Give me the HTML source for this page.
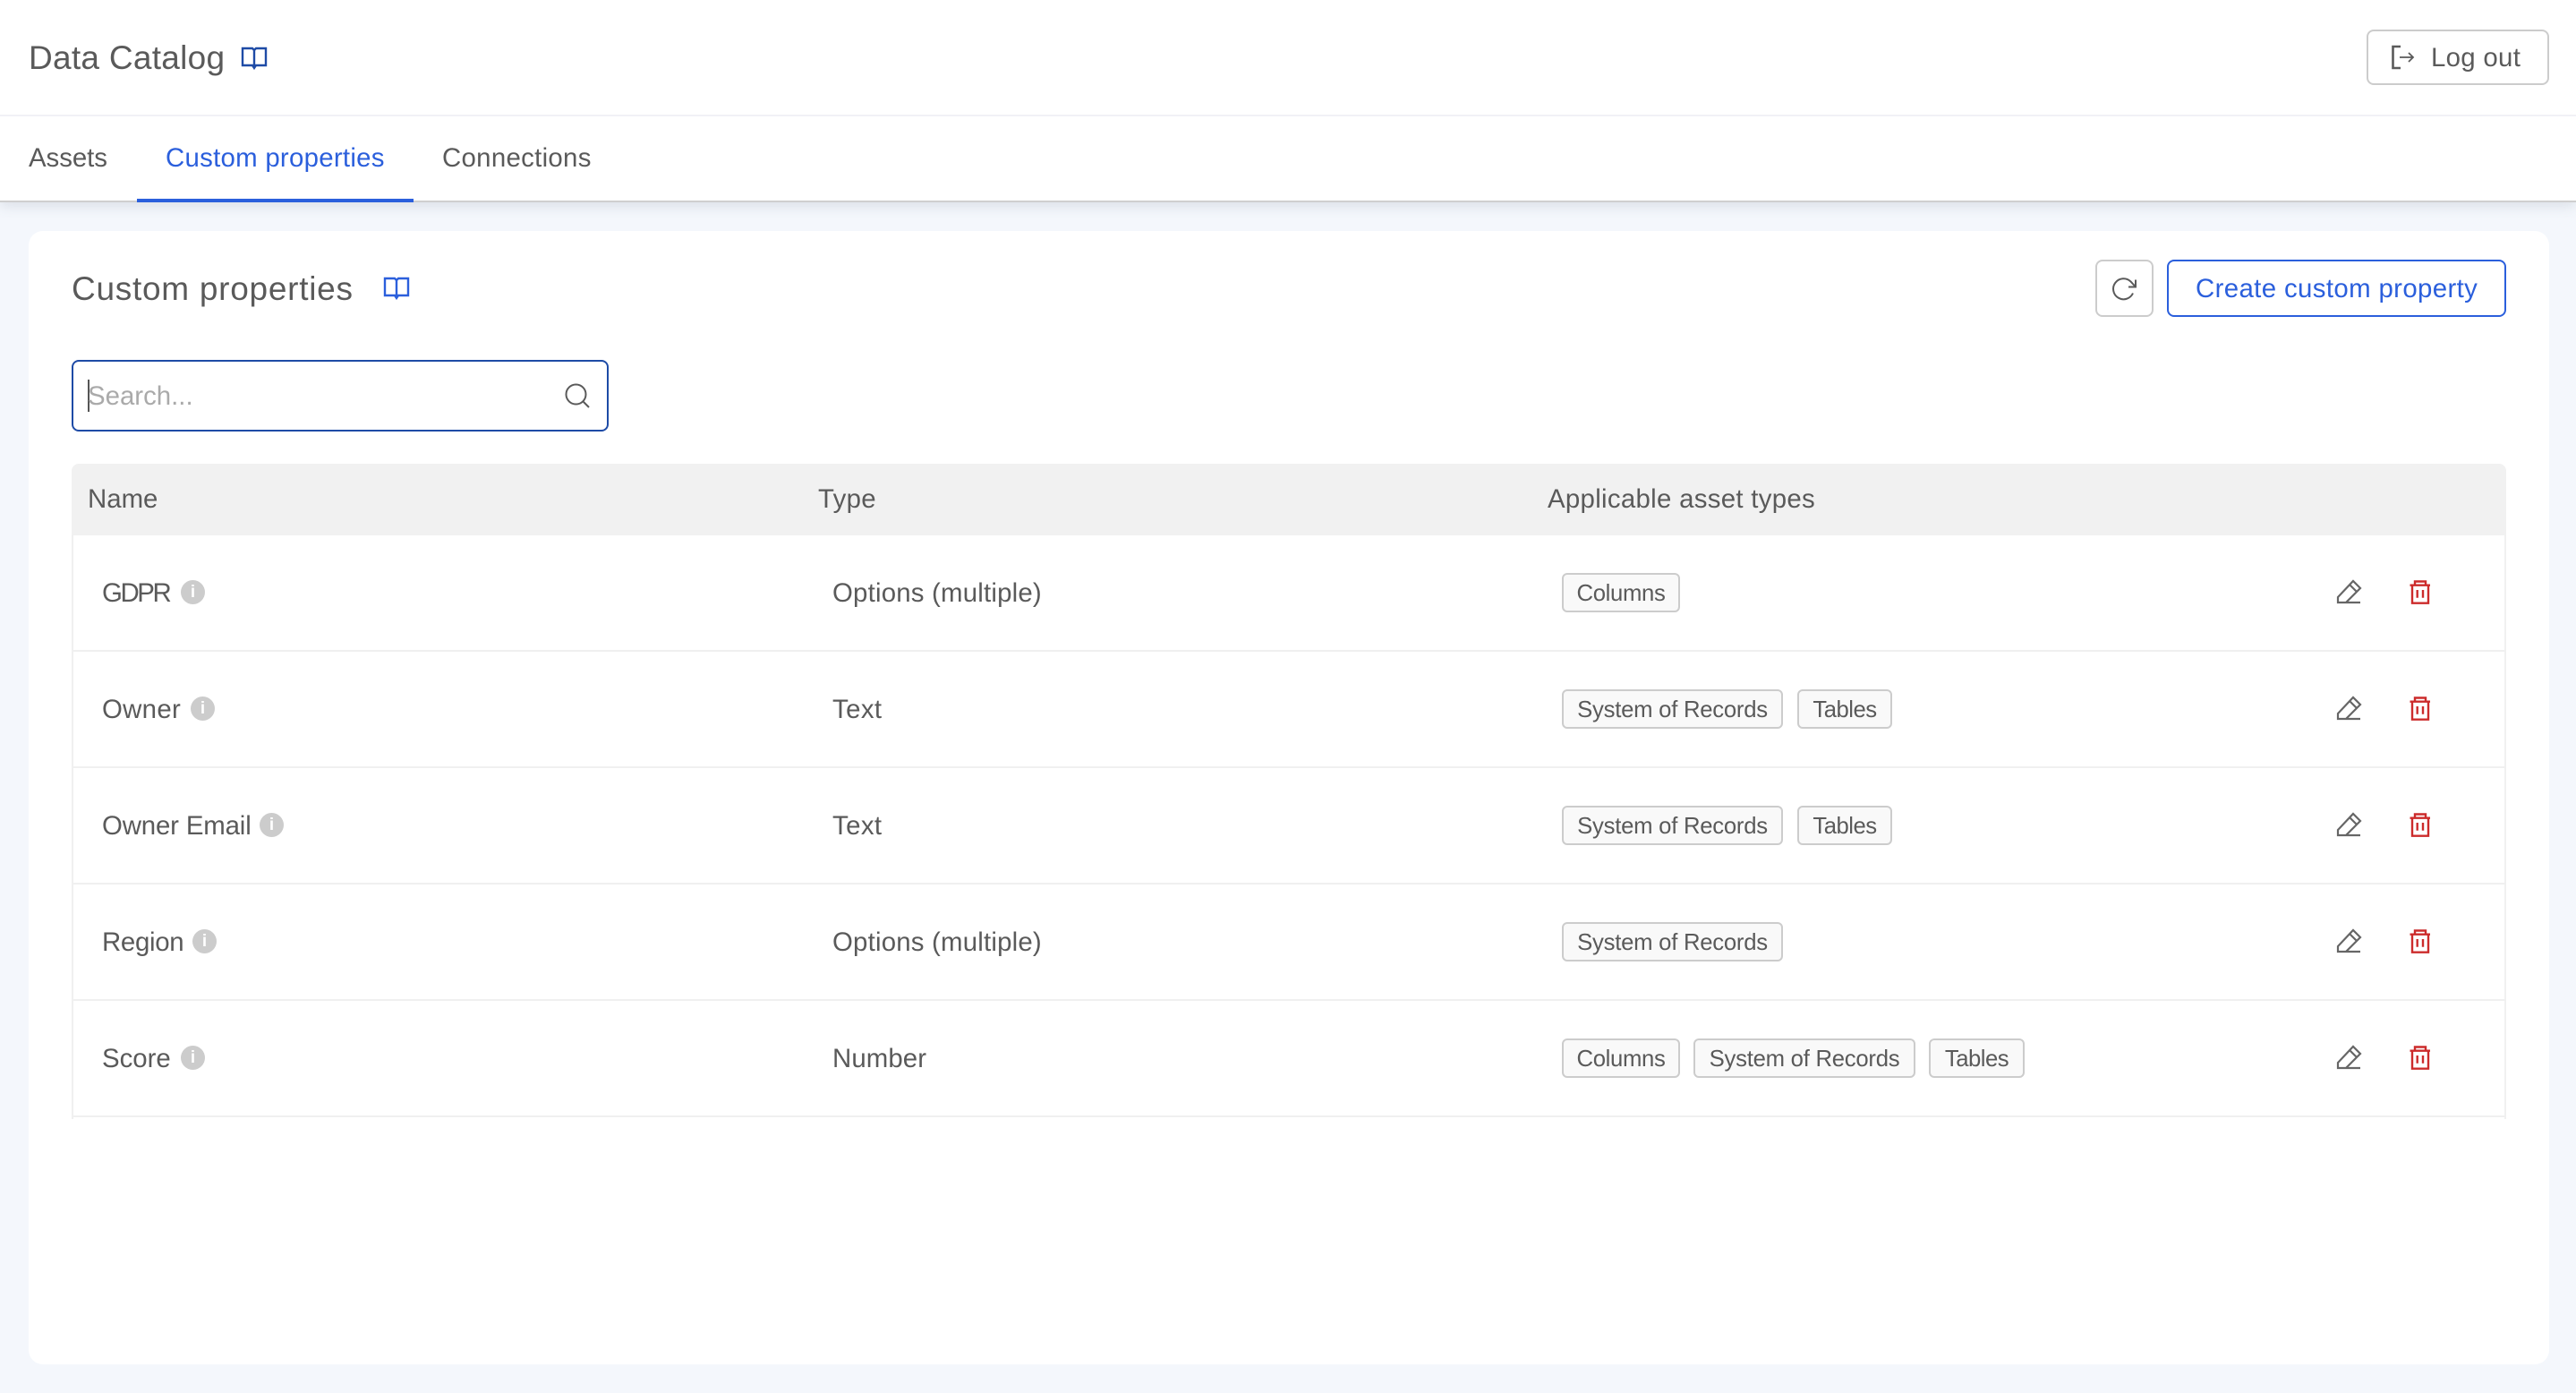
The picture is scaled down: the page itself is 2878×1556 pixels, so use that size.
<!DOCTYPE html>
<html lang="en">
<head>
<meta charset="utf-8">
<title>Data Catalog</title>
<style>
*{box-sizing:border-box;margin:0;padding:0}
html,body{width:2878px;height:1556px;overflow:hidden;background:#f4f7fc;font-family:"Liberation Sans",sans-serif;color:#5a5a5a;font-size:29.4px}
.t{position:absolute;white-space:nowrap;height:40px;line-height:40px;margin-top:1px}
svg{position:absolute;display:block;fill:none}
#top{position:absolute;left:0;top:0;width:2878px;height:226px;background:#fff;border-bottom:2px solid #cfcfcf;box-shadow:0 4px 14px rgba(90,100,120,.16)}
#hl{position:absolute;left:0;top:128px;width:2878px;height:2px;background:#f1f1f6}
#ul{position:absolute;left:153px;top:222px;width:309px;height:4px;background:#2b5fdc}
.btn{position:absolute;background:#fff;border:2px solid #ccc;border-radius:8px}
#card{position:absolute;left:32px;top:258px;width:2816px;height:1266px;background:#fff;border-radius:16px}
#search{position:absolute;left:80px;top:402px;width:600px;height:80px;border:2px solid #1e4ba6;border-radius:8px;background:#fff}
#caret{position:absolute;left:98px;top:424px;width:2px;height:36px;background:#555}
#thead{position:absolute;left:80px;top:518px;width:2720px;height:80px;background:#f1f1f1;border-radius:8px 8px 0 0}
.sep{position:absolute;left:80px;width:2720px;height:2px;background:#f0f0f0}
.v{position:absolute;top:598px;height:652px;width:2px;background:#f0f0f0}
.chip{position:absolute;height:44px;line-height:42px;background:#f9f9f9;border:2px solid #ccc;border-radius:6px;font-size:25.7px;text-align:center;white-space:nowrap}
.info{position:absolute;width:27px;height:27px;border-radius:50%;background:#ccc;color:#fff;font:bold 19px/28px "Liberation Sans",sans-serif;text-align:center}
</style>
</head>
<body>
<div id="top"></div>
<div id="hl"></div>
<div id="ul"></div>

<div class="t" style="left:32px;top:44px;font-size:37px;letter-spacing:.28px">Data Catalog</div>
<svg style="left:268px;top:49px" width="32" height="32" viewBox="0 0 32 32" stroke="#1e4ba6" stroke-width="2.4"><path d="M3 5h11l2 2 2-2h11v19H18l-2 3-2-3H3zM16 7v18"/></svg>

<div class="btn" style="left:2644px;top:33px;width:204px;height:62px"></div>
<svg style="left:2668px;top:48px" width="32" height="32" viewBox="0 0 32 32" stroke="#5a5a5a"><path d="M14 4H5.5V28H14" stroke-width="2.6"/><path d="M13 16h15M23 11l5 5-5 5" stroke-width="1.8"/></svg>
<div class="t" style="left:2716px;top:44px;letter-spacing:.3px">Log out</div>

<div class="t" style="left:32px;top:156px;letter-spacing:-.05px">Assets</div>
<div class="t" style="left:185px;top:156px;color:#2b5fdc;letter-spacing:.27px">Custom properties</div>
<div class="t" style="left:494px;top:156px;letter-spacing:.3px">Connections</div>

<div id="card"></div>
<div class="t" style="left:80px;top:302px;font-size:37px;letter-spacing:.73px">Custom properties</div>
<svg style="left:427px;top:306px" width="32" height="32" viewBox="0 0 32 32" stroke="#2b5fdc" stroke-width="2.4"><path d="M3 5h11l2 2 2-2h11v19H18l-2 3-2-3H3zM16 7v18"/></svg>

<div class="btn" style="left:2341px;top:290px;width:65px;height:64px"></div>
<svg style="left:2358px;top:306px" width="32" height="32" viewBox="0 0 32 32" stroke="#5a5a5a" stroke-width="2"><path d="M25 21.5A11.5 11.5 0 1 1 22.5 8.5L28 14.5"/><path d="M28 6.5v8h-8"/></svg>
<div class="btn" style="left:2421px;top:290px;width:379px;height:64px;border-color:#2b5fdc"></div>
<div class="t" style="left:2453px;top:302px;color:#2b5fdc;letter-spacing:.37px">Create custom property</div>

<div id="search"></div>
<div id="caret"></div>
<div class="t" style="left:98px;top:422px;color:#aaa">Search...</div>
<svg style="left:629px;top:426px" width="32" height="32" viewBox="0 0 32 32" stroke="#5a5a5a" stroke-width="2"><circle cx="14.5" cy="14.5" r="11"/><path d="M22.5 22.5L29 29"/></svg>

<div id="thead"></div>
<div class="t" style="left:98px;top:537px">Name</div>
<div class="t" style="left:914px;top:537px;letter-spacing:.3px">Type</div>
<div class="t" style="left:1729px;top:537px;letter-spacing:.3px">Applicable asset types</div>
<div class="v" style="left:80px"></div>
<div class="v" style="left:2798px"></div>
<div class="sep" style="top:726px"></div>
<div class="sep" style="top:856px"></div>
<div class="sep" style="top:986px"></div>
<div class="sep" style="top:1116px"></div>
<div class="sep" style="top:1246px"></div>

<!-- row 1 -->
<div class="t" style="left:114px;top:642px;letter-spacing:-2.4px">GDPR</div>
<div class="info" style="left:202px;top:648px">i</div>
<div class="t" style="left:930px;top:642px;letter-spacing:.2px">Options (multiple)</div>
<div class="chip" style="left:1745px;top:640px;width:132px;letter-spacing:-.35px">Columns</div>
<svg style="left:2608px;top:646px" width="32" height="32" viewBox="0 0 32 32" stroke="#666" stroke-width="2.2"><path d="M4 27v-6L21 3l8 8-16 16H4zM17 7l8 8M13 27h16"/></svg>
<svg style="left:2688px;top:647px" width="32" height="32" viewBox="0 0 32 32" stroke="#cc2b2b" stroke-width="2.4"><path d="M4.5 6.7H27M10 6.7V2.5h12v4.2M7 6.7V26.7h18V6.7M12.7 12v8.7M19 12v8.7"/></svg>

<!-- row 2 -->
<div class="t" style="left:114px;top:772px;letter-spacing:.3px">Owner</div>
<div class="info" style="left:213px;top:778px">i</div>
<div class="t" style="left:930px;top:772px;letter-spacing:.4px">Text</div>
<div class="chip" style="left:1745px;top:770px;width:247px;letter-spacing:-.25px">System of Records</div>
<div class="chip" style="left:2008px;top:770px;width:106px;letter-spacing:-.5px">Tables</div>
<svg style="left:2608px;top:776px" width="32" height="32" viewBox="0 0 32 32" stroke="#666" stroke-width="2.2"><path d="M4 27v-6L21 3l8 8-16 16H4zM17 7l8 8M13 27h16"/></svg>
<svg style="left:2688px;top:777px" width="32" height="32" viewBox="0 0 32 32" stroke="#cc2b2b" stroke-width="2.4"><path d="M4.5 6.7H27M10 6.7V2.5h12v4.2M7 6.7V26.7h18V6.7M12.7 12v8.7M19 12v8.7"/></svg>

<!-- row 3 -->
<div class="t" style="left:114px;top:902px;letter-spacing:-.15px">Owner Email</div>
<div class="info" style="left:290px;top:908px">i</div>
<div class="t" style="left:930px;top:902px;letter-spacing:.4px">Text</div>
<div class="chip" style="left:1745px;top:900px;width:247px;letter-spacing:-.25px">System of Records</div>
<div class="chip" style="left:2008px;top:900px;width:106px;letter-spacing:-.5px">Tables</div>
<svg style="left:2608px;top:906px" width="32" height="32" viewBox="0 0 32 32" stroke="#666" stroke-width="2.2"><path d="M4 27v-6L21 3l8 8-16 16H4zM17 7l8 8M13 27h16"/></svg>
<svg style="left:2688px;top:907px" width="32" height="32" viewBox="0 0 32 32" stroke="#cc2b2b" stroke-width="2.4"><path d="M4.5 6.7H27M10 6.7V2.5h12v4.2M7 6.7V26.7h18V6.7M12.7 12v8.7M19 12v8.7"/></svg>

<!-- row 4 -->
<div class="t" style="left:114px;top:1032px;letter-spacing:-.3px">Region</div>
<div class="info" style="left:215px;top:1038px">i</div>
<div class="t" style="left:930px;top:1032px;letter-spacing:.2px">Options (multiple)</div>
<div class="chip" style="left:1745px;top:1030px;width:247px;letter-spacing:-.25px">System of Records</div>
<svg style="left:2608px;top:1036px" width="32" height="32" viewBox="0 0 32 32" stroke="#666" stroke-width="2.2"><path d="M4 27v-6L21 3l8 8-16 16H4zM17 7l8 8M13 27h16"/></svg>
<svg style="left:2688px;top:1037px" width="32" height="32" viewBox="0 0 32 32" stroke="#cc2b2b" stroke-width="2.4"><path d="M4.5 6.7H27M10 6.7V2.5h12v4.2M7 6.7V26.7h18V6.7M12.7 12v8.7M19 12v8.7"/></svg>

<!-- row 5 -->
<div class="t" style="left:114px;top:1162px">Score</div>
<div class="info" style="left:202px;top:1168px">i</div>
<div class="t" style="left:930px;top:1162px;letter-spacing:.1px">Number</div>
<div class="chip" style="left:1745px;top:1160px;width:132px;letter-spacing:-.35px">Columns</div>
<div class="chip" style="left:1892px;top:1160px;width:248px;letter-spacing:-.25px">System of Records</div>
<div class="chip" style="left:2155px;top:1160px;width:107px;letter-spacing:-.5px">Tables</div>
<svg style="left:2608px;top:1166px" width="32" height="32" viewBox="0 0 32 32" stroke="#666" stroke-width="2.2"><path d="M4 27v-6L21 3l8 8-16 16H4zM17 7l8 8M13 27h16"/></svg>
<svg style="left:2688px;top:1167px" width="32" height="32" viewBox="0 0 32 32" stroke="#cc2b2b" stroke-width="2.4"><path d="M4.5 6.7H27M10 6.7V2.5h12v4.2M7 6.7V26.7h18V6.7M12.7 12v8.7M19 12v8.7"/></svg>
</body>
</html>
